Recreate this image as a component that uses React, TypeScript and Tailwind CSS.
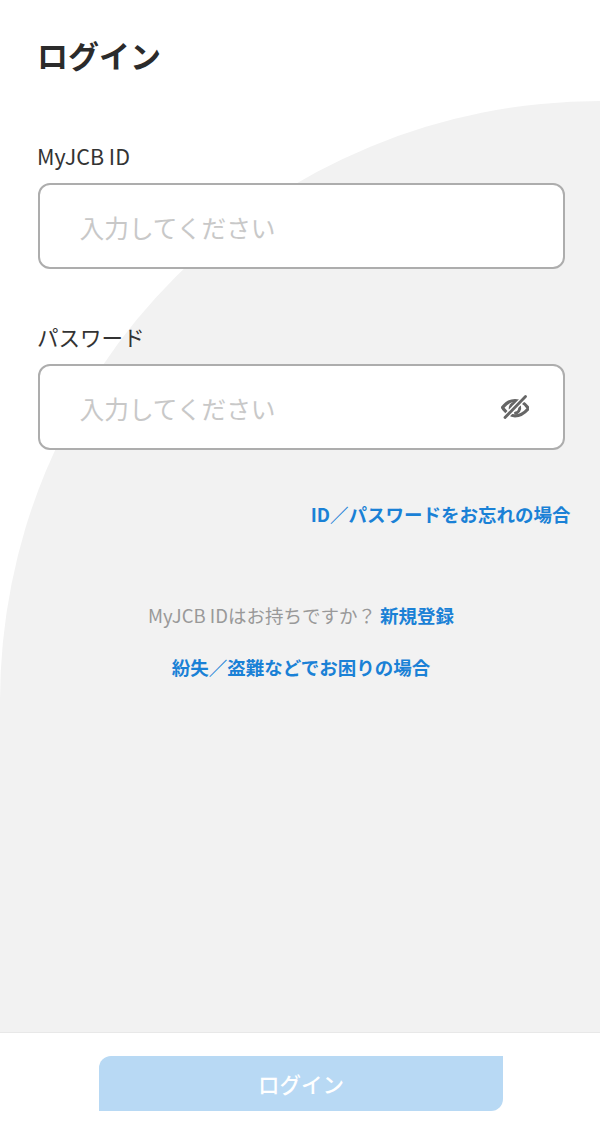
const cjk = "font-['Noto_Sans_CJK_JP','Noto_Sans',sans-serif]";

function EyeOffIcon() {
  return (
    <svg viewBox="0 0 28 24" className="w-7 h-6 text-[#666666]" fill="none" stroke="currentColor" strokeLinecap="round">
      <path d="M1.5 12.5 C5 8 9 5.5 14 5.5 C19 5.5 23.5 8 26.8 12.5" strokeWidth="3.2" />
      <path d="M2.5 14 C6 18.5 10 20.8 14 20.8 C19 20.8 23 18.5 26.5 14.5" strokeWidth="3.2" />
      <path d="M9.5 15 C8.5 11.5 10.5 8.5 14 8" strokeWidth="3" />
      <path d="M18.5 11.5 C19.5 15 17 17.8 14.5 18" strokeWidth="3" />
      <path d="M3 23.5 L25 1" stroke="#ffffff" strokeWidth="5.5" />
      <path d="M4 22.5 L24.5 1.5" strokeWidth="2.8" />
    </svg>
  );
}

function Field({ label, icon }: { label: string; icon?: boolean }) {
  return (
    <div>
      <label className="block -ml-px text-[21.5px] leading-[28px] text-[#333333]">{label}</label>
      <div className="mt-[13px] h-[86px] flex items-center justify-between pl-[39.5px] pr-[34px] bg-white border-2 border-[#adadad] rounded-[12px]">
        <span className="pt-px text-[24.7px] leading-[32px] text-[#c8c8c8]">入力してください</span>
        {icon && <EyeOffIcon />}
      </div>
    </div>
  );
}

export default function App() {
  return (
    <div className={`relative w-[600px] h-[1139px] bg-white overflow-hidden flex flex-col ${cjk}`}>
      {/* grey backdrop curve */}
      <div className="absolute left-0 right-0 top-[101px] bottom-0 bg-[#f2f2f2] rounded-tl-[600px]" />

      <main className="relative flex-1 pl-[38px] pr-[35px] pt-[35px]">
        <h1 className="-ml-px text-[31px] leading-[40px] font-bold text-[#2b2b2b]">ログイン</h1>

        <div className="mt-[67px] flex flex-col gap-[54px]">
          <Field label="MyJCB ID" />
          <Field label="パスワード" icon />
        </div>

        <div className="mt-[50px] -mr-[5.5px] text-right text-[18.5px] leading-[28px] font-bold text-[#1a81d6]">
          ID／パスワードをお忘れの場合
        </div>

        <p className="mt-[73px] -ml-px text-center text-[18.5px] leading-[28px] text-[#999999]">
          MyJCB IDはお持ちですか？ <span className="font-bold text-[#1a81d6]">新規登録</span>
        </p>

        <p className="mt-[24px] -ml-px text-center text-[18.5px] leading-[28px] font-bold text-[#1a81d6]">
          紛失／盗難などでお困りの場合
        </p>
      </main>

      <footer className="relative h-[107px] bg-white border-t border-[#e8e8e8] pt-[23px] pl-[99px]">
        <button
          type="button"
          className="w-[404px] h-[55px] pt-[2px] bg-[#b8d9f4] rounded-tl-[12px] rounded-br-[12px] text-white text-[21.5px] font-medium"
        >
          ログイン
        </button>
      </footer>
    </div>
  );
}
